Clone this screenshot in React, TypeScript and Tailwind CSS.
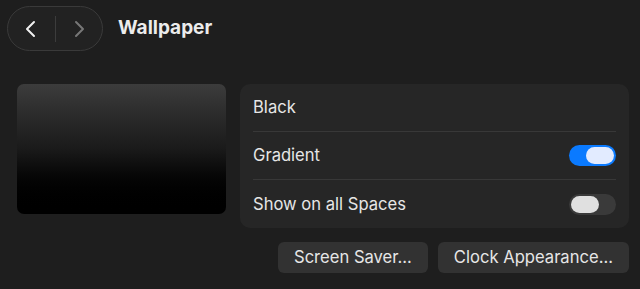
function Toggle({ on }: { on: boolean }) {
  return (
    <div
      className={`flex h-[21px] w-[47px] items-center rounded-full px-[2px] ${
        on ? 'justify-end bg-[#0a7aff]' : 'justify-start bg-[#3a3a3a]'
      }`}
    >
      <div className={`h-[17px] w-[28px] rounded-full ${on ? 'bg-[#e2ebff]' : 'bg-[#e0e0e0]'}`} />
    </div>
  )
}

function Row({ label, toggle, last }: { label: string; toggle?: boolean; last?: boolean }) {
  return (
    <div className={`mx-[13px] flex h-[48px] items-center justify-between ${last ? '' : 'border-b border-[#383838]'}`}>
      <span className="text-[16.6px] text-[#e6e6e6]">{label}</span>
      {toggle !== undefined && <Toggle on={toggle} />}
    </div>
  )
}

export default function App() {
  return (
    <div
      className="h-[289px] w-[640px] overflow-hidden bg-[#1e1e1e] pt-[6px]"
      style={{ fontFamily: 'Inter, "Liberation Sans", sans-serif' }}
    >
      <div className="flex items-center pl-[7px]">
        <div className="flex h-[45px] w-[96px] items-center rounded-full border border-[#3a3a3a] bg-[#222222]">
          <button className="flex h-full w-[47px] items-center justify-center text-[#f0f0f0]">
            <svg width="14" height="18" viewBox="0 0 14 18" fill="none">
              <path d="M10 2 L3 9 L10 16" stroke="currentColor" strokeWidth="2" strokeLinecap="round" strokeLinejoin="round" />
            </svg>
          </button>
          <div className="h-[26px] w-px bg-[#3c3c3c]" />
          <button className="flex h-full w-[47px] items-center justify-center text-[#777777]">
            <svg width="14" height="18" viewBox="0 0 14 18" fill="none">
              <path d="M4 2 L11 9 L4 16" stroke="currentColor" strokeWidth="2" strokeLinecap="round" strokeLinejoin="round" />
            </svg>
          </button>
        </div>
        <h1 className="ml-[15px] text-[19px] font-bold text-[#ececec]">Wallpaper</h1>
      </div>

      <div className="mt-[33px] flex gap-[14px] pl-[17px]">
        <div className="h-[130px] w-[209px] rounded-[7px] bg-gradient-to-b from-[#3c3c3c] via-[#1a1a1a] to-[#000000]" />
        <div className="w-[389px] rounded-[10px] bg-[#262626]">
          <Row label="Black" />
          <Row label="Gradient" toggle />
          <Row label="Show on all Spaces" toggle={false} last />
        </div>
      </div>

      <div className="mt-[14px] flex justify-end gap-[10px] pr-[11px]">
        <button className="h-[31px] rounded-[6px] bg-[#323232] px-[16px] text-[16.6px] text-[#e6e6e6]">Screen Saver...</button>
        <button className="h-[31px] rounded-[6px] bg-[#323232] px-[16px] text-[16.6px] text-[#e6e6e6]">Clock Appearance...</button>
      </div>
    </div>
  )
}
